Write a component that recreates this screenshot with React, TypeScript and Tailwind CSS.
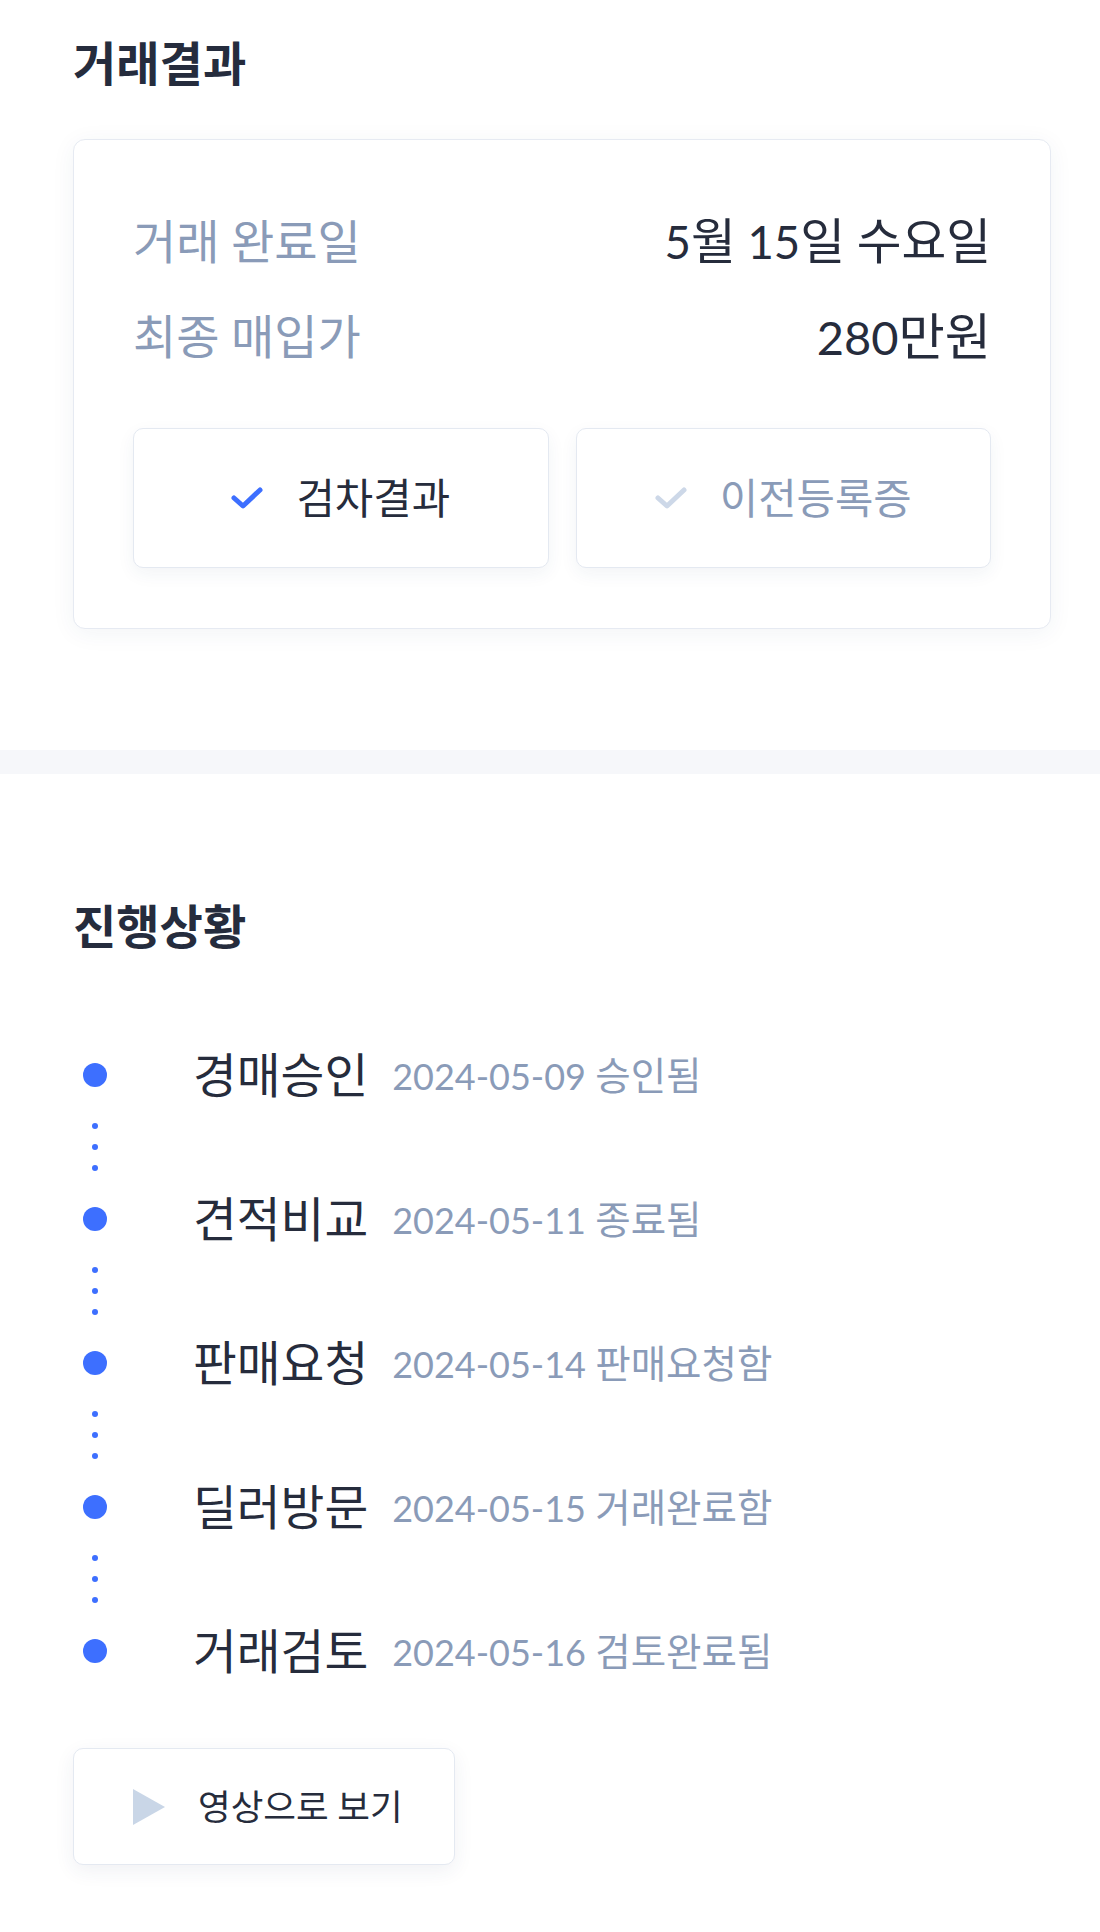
import React from "react";

const items = [
  { label: "경매승인", date: "2024-05-09 승인됨" },
  { label: "견적비교", date: "2024-05-11 종료됨" },
  { label: "판매요청", date: "2024-05-14 판매요청함" },
  { label: "딜러방문", date: "2024-05-15 거래완료함" },
  { label: "거래검토", date: "2024-05-16 검토완료됨" },
];

// Hangul runs are drawn slightly larger than the Latin (Lato) runs,
// as in the reference font.
function K({ children }: { children: string }) {
  const parts = children.split(/([\uAC00-\uD7A3\u3131-\u318E]+)/);
  return (
    <>
      {parts.map((p, i) =>
        /[\uAC00-\uD7A3\u3131-\u318E]/.test(p) ? (
          <span key={i} className="text-[1.07em]">
            {p}
          </span>
        ) : (
          <React.Fragment key={i}>{p}</React.Fragment>
        )
      )}
    </>
  );
}

function Check({ color }: { color: string }) {
  return (
    <svg width="32" height="22" viewBox="0 0 32 22" fill="none">
      <polyline
        points="3,11 12,19 29,3"
        stroke={color}
        strokeWidth="5"
        strokeLinecap="round"
        strokeLinejoin="round"
      />
    </svg>
  );
}

export default function App() {
  return (
    <div className="w-[1100px] min-h-[1932px] bg-white font-['Lato','Noto_Sans_CJK_KR',sans-serif] text-[#252c3d]">
      {/* 거래결과 */}
      <section className="pl-[73px] pr-[49px] pt-[30px] pb-[121px]">
        <h2 className="text-[44px] leading-[66px] font-bold text-[#252c3d]">
          <K>거래결과</K>
        </h2>
        <div className="mt-[42px] rounded-[12px] border border-[#e6eaf2] bg-white shadow-[0_4px_24px_rgba(40,60,100,0.06)] px-[59px] pt-[68px] pb-[60px]">
          <div className="flex items-center justify-between h-[66px] leading-[66px]">
            <span className="text-[44px] text-[#8a9bb8]">
              <K>거래 완료일</K>
            </span>
            <span className="text-[45.5px] text-[#262c3c]">
              <K>5월 15일 수요일</K>
            </span>
          </div>
          <div className="mt-[29px] flex items-center justify-between h-[66px] leading-[66px]">
            <span className="text-[44px] text-[#8a9bb8]">
              <K>최종 매입가</K>
            </span>
            <span className="text-[47px] text-[#262c3c]">
              <K>280만원</K>
            </span>
          </div>
          <div className="mt-[59px] grid grid-cols-2 gap-[27px]">
            <button className="h-[140px] flex items-center justify-center gap-[33px] rounded-[10px] border border-[#e4e9f1] bg-white shadow-[0_6px_18px_rgba(40,60,100,0.06)]">
              <Check color="#3d6fff" />
              <span className="text-[39px] text-[#262c3c]">
                <K>검차결과</K>
              </span>
            </button>
            <button className="h-[140px] flex items-center justify-center gap-[33px] rounded-[10px] border border-[#e4e9f1] bg-white shadow-[0_6px_18px_rgba(40,60,100,0.06)]">
              <Check color="#cdd8e8" />
              <span className="text-[39px] text-[#8a9bb8]">
                <K>이전등록증</K>
              </span>
            </button>
          </div>
        </div>
      </section>

      <div className="h-[24px] bg-[#f6f7fa]" />

      {/* 진행상황 */}
      <section className="pl-[73px] pr-[49px] pt-[119px] pb-[67px]">
        <h2 className="text-[44px] leading-[66px] font-bold text-[#252c3d]">
          <K>진행상황</K>
        </h2>
        <div className="mt-[82px] flex flex-col">
          {items.map((it, i) => (
            <div key={it.label} className="flex flex-col">
              <div className="flex items-center h-[66px] leading-[66px]">
                <div className="ml-[10px] w-[24px] flex justify-center">
                  <div className="w-[24px] h-[24px] rounded-full bg-[#3d6fff]" />
                </div>
                <span className="ml-[86px] text-[44.5px] text-[#262c3c]">
                  <K>{it.label}</K>
                </span>
                <span className="ml-[24px] text-[36px] text-[#8a9bb8]">
                  <K>{it.date}</K>
                </span>
              </div>
              {i < items.length - 1 && (
                <div className="ml-[10px] w-[24px] flex flex-col items-center gap-[15px] py-[15px]">
                  <div className="w-[6px] h-[6px] rounded-full bg-[#3d6fff]" />
                  <div className="w-[6px] h-[6px] rounded-full bg-[#3d6fff]" />
                  <div className="w-[6px] h-[6px] rounded-full bg-[#3d6fff]" />
                </div>
              )}
            </div>
          ))}
        </div>
        <button className="mt-[64px] h-[117px] flex items-center gap-[33px] pl-[59px] pr-[51px] rounded-[10px] border border-[#e4e9f1] bg-white shadow-[0_6px_20px_rgba(40,60,100,0.07)]">
          <svg width="32" height="36" viewBox="0 0 32 36">
            <polygon points="0,0 32,18 0,36" fill="#c9d6e7" />
          </svg>
          <span className="text-[33.2px] text-[#262c3c]">
            <K>영상으로 보기</K>
          </span>
        </button>
      </section>
    </div>
  );
}
